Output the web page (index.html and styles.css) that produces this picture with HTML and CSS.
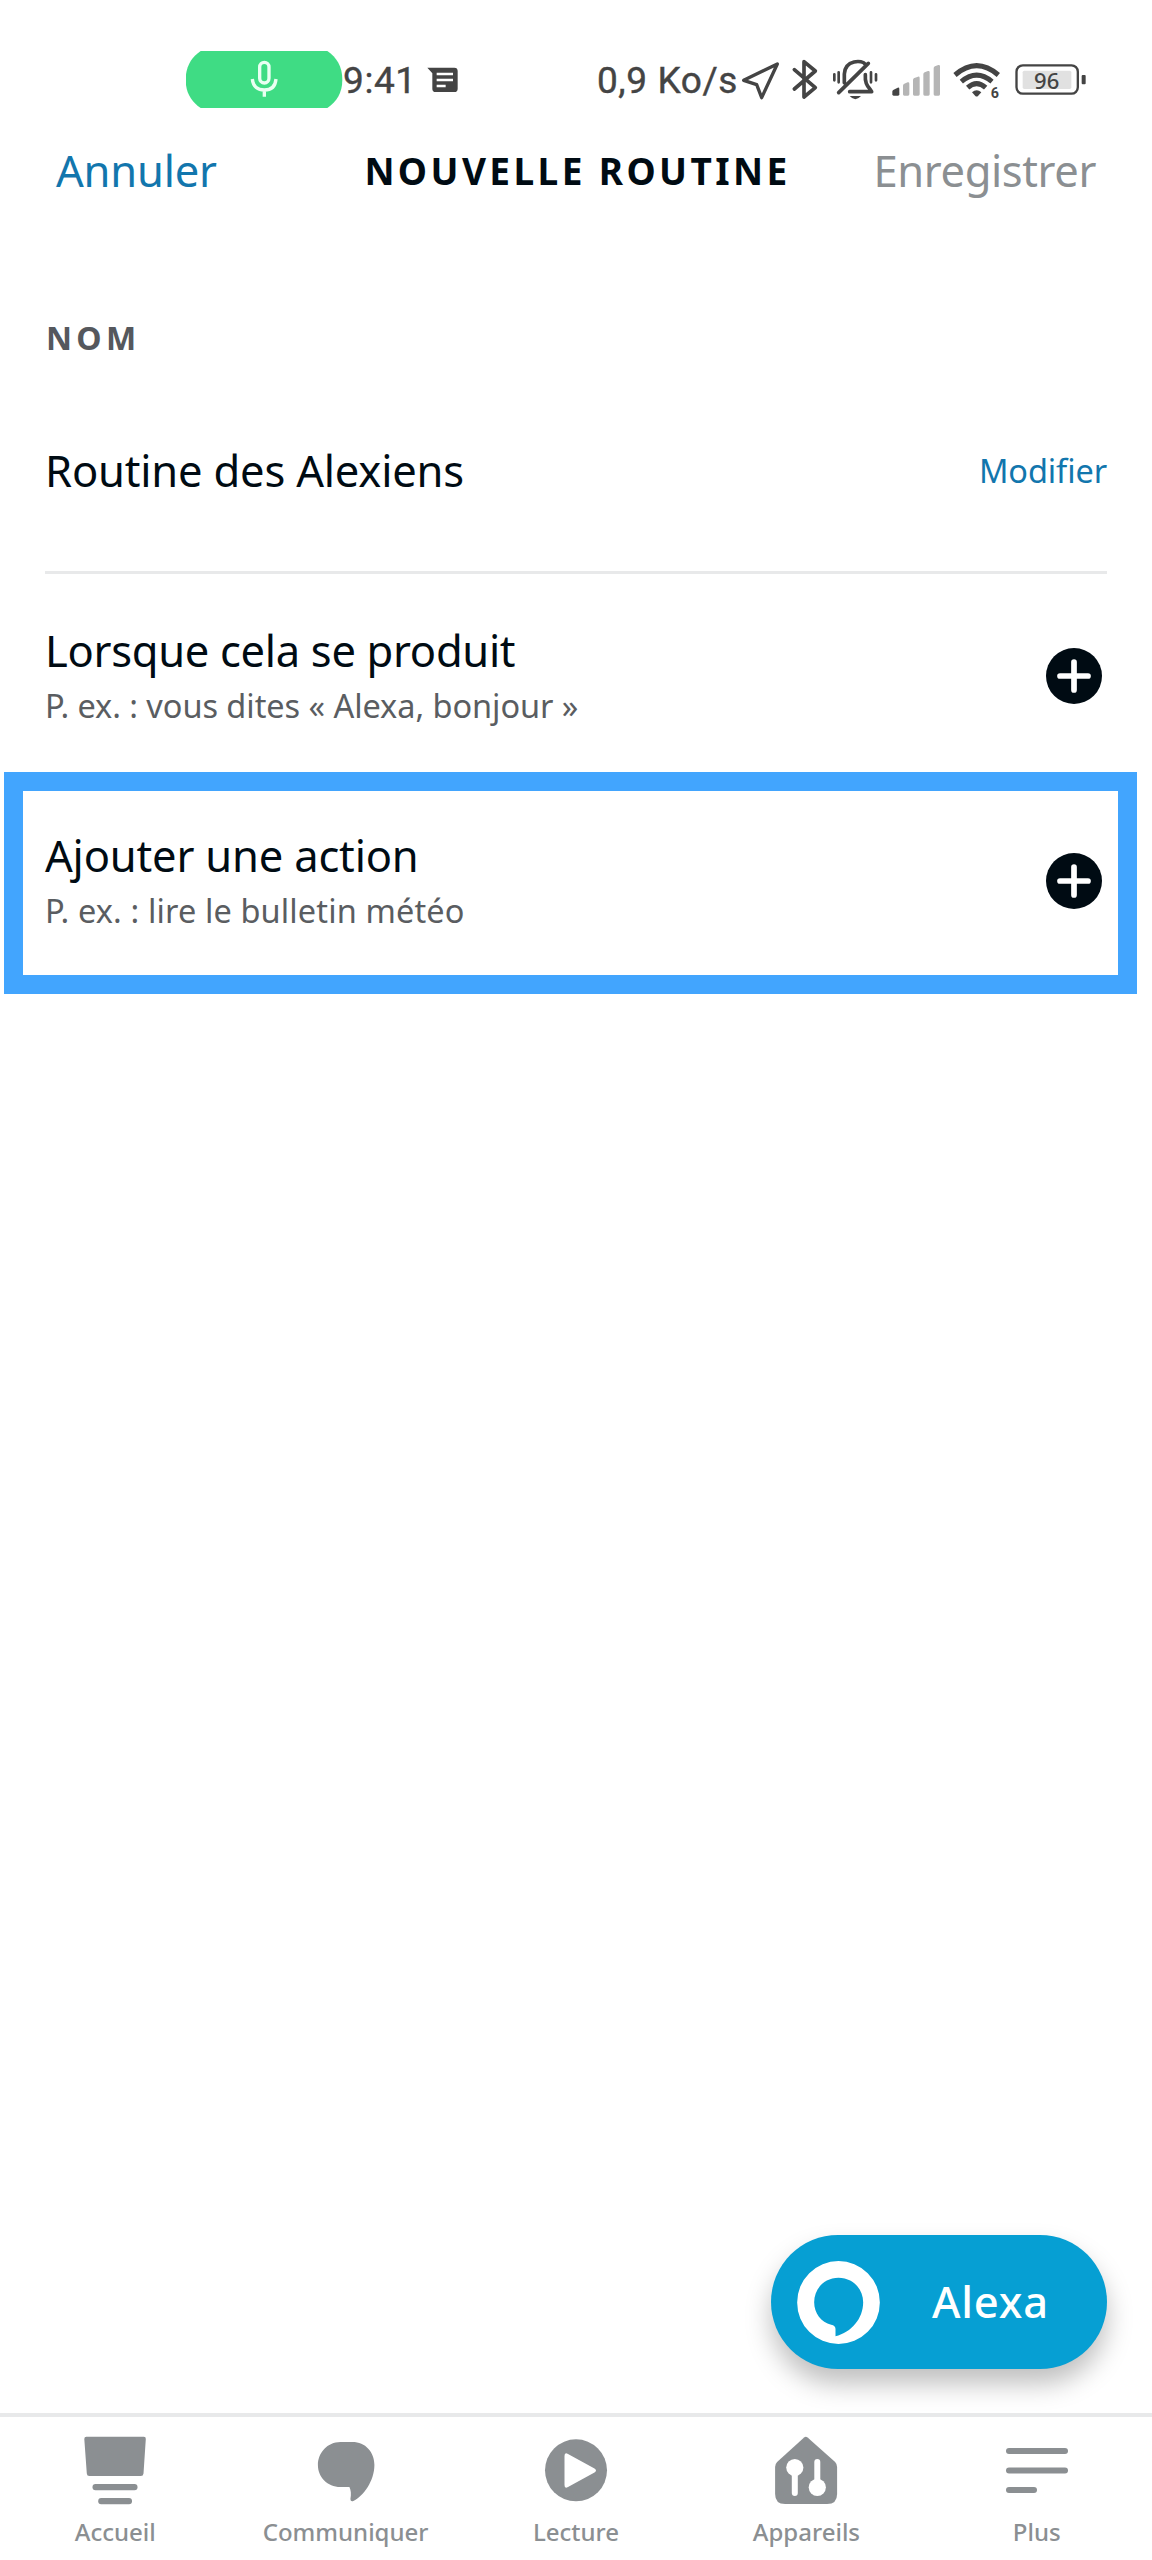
FILE: index.html
```html
<!DOCTYPE html>
<html lang="fr">
<head>
<meta charset="utf-8">
<title>Nouvelle routine</title>
<link rel="stylesheet" href="styles.css">
</head>
<body>
<div class="screen">
  <div class="status">
    <svg class="mic" viewBox="48 63 471 180">
      <path fill="#3fdc84" d="M92 63H472C500 82 517 110 517 149S500 215 472 234H92C64 215 47 188 47 149S64 82 92 63Z"/>
      <g fill="none" stroke="#e9fff2" stroke-width="10"><rect x="269" y="97" width="28" height="62" rx="14"/><path d="M247 147C249 170 264 180 283 180S316 170 318 147M283 180V200"/></g>
    </svg>
    <span class="time">9:41</span>
    <svg class="message" viewBox="744 63 126 180">
      <path fill="#444" d="M772 113H853Q863 113 863 123V176Q863 186 853 186H797Q787 186 787 176V130Z"/>
      <path stroke="#fff" stroke-width="7" d="M800 132H849M800 150H849M800 168H827"/>
    </svg>
    <span class="rate">0,9 Ko/s</span>
    <svg width="46" viewBox="480 33 138 180"><path class="line" stroke-width="10" d="M491 121L592 72L545 173L530 134Z"/></svg>
    <svg width="38" viewBox="618 33 114 180"><path class="line" stroke-width="11" d="M643 89L706 143L672 171V65L706 93L643 147"/></svg>
    <svg width="61" viewBox="12 33 183 180">
      <path class="line" stroke-width="11" d="M56 158L145 70M73 128V102C75 58 128 60 135 72M136 104C134 135 146 140 155 155H89"/>
      <path class="line" stroke-width="8" d="M43 103V121M56 97V127M153 97V127M168 103V121"/>
      <path fill="#444" d="M89 168H123Q106 187 89 168Z"/>
    </svg>
    <svg width="61" viewBox="195 33 183 180">
      <path fill="#444" d="M217 155Q217 151 221 149L233 143Q238 142 238 147V163Q238 167 234 167H221Q217 167 217 163Z"/>
      <path fill="#b5b5b5" d="M249 137Q249 133 253 131L263 127Q268 126 268 131V163Q268 167 264 167H253Q249 167 249 163ZM279 120Q279 116 283 114L294 110Q299 109 299 114V163Q299 167 295 167H283Q279 167 279 163ZM310 103Q310 99 314 97L324 93Q329 92 329 97V163Q329 167 325 167H314Q310 167 310 163ZM341 85Q341 81 345 79L355 75Q360 74 360 79V163Q360 167 356 167H345Q341 167 341 163Z"/>
    </svg>
    <svg width="60" viewBox="378 33 180 180">
      <path fill="none" stroke="#444" stroke-width="15" d="M405 105Q470 49 535 105M424 125Q470 86 516 125M443 143Q470 119 497 143"/>
      <path fill="#444" d="M456 157Q470 144 484 157L474 168Q470 171 466 168Z"/>
      <text class="wifi-gen" x="512" y="175">6</text>
    </svg>
    <svg width="84" viewBox="558 33 252 180">
      <rect x="589.500" y="76" width="184" height="85" rx="19" fill="none" stroke="#444" stroke-width="7"/>
      <rect x="608" y="92" width="146" height="55" rx="5" fill="#e1e1e1"/>
      <rect x="785" y="105" width="12" height="28" rx="3" fill="#444"/>
      <text class="charge" x="680" y="147" text-anchor="middle">96</text>
    </svg>
  </div>

  <header class="nav">
    <a class="cancel">Annuler</a>
    <h1>NOUVELLE ROUTINE</h1>
    <a class="save">Enregistrer</a>
  </header>

  <main>
    <h2>NOM</h2>
    <div class="name">
      <span class="title">Routine des Alexiens</span>
      <a class="edit">Modifier</a>
    </div>
    <div class="row">
      <div>
        <div class="title when">Lorsque cela se produit</div>
        <div class="hint">P. ex. : vous dites « Alexa, bonjour »</div>
      </div>
      <svg class="add" viewBox="0 0 56 56"><circle cx="28" cy="28" r="28"/><path d="M14 28H42M28 14V42"/></svg>
    </div>
    <div class="row selected">
      <div>
        <div class="title">Ajouter une action</div>
        <div class="hint weather">P. ex. : lire le bulletin météo</div>
      </div>
      <svg class="add" viewBox="0 0 56 56"><circle cx="28" cy="28" r="28"/><path d="M14 28H42M28 14V42"/></svg>
    </div>
  </main>

  <button class="alexa">
    <svg viewBox="171 153 248 249"><path fill="#fff" fill-rule="evenodd" d="M295 153A124 124.500 0 1 1 295 402A124 124.500 0 1 1 295 153ZM295 203C252 203 222 237 222 277C222 310 243 337 273 344Q286 346 286 357V379C334 367 369 326 369 277C369 237 338 203 295 203Z"/></svg>
    <span>Alexa</span>
  </button>

  <nav class="tabs">
    <a><svg viewBox="79.200 2432 72 76"><path d="M86.500 2436.700H144Q146.200 2436.700 146 2439L143.700 2473.500Q143.500 2476 141 2476H89.500Q87.200 2476 87 2473.500L84.500 2439Q84.500 2436.700 86.500 2436.700Z"/><rect x="92.700" y="2484" width="45" height="6.200" rx="3"/><rect x="98.400" y="2498" width="33.800" height="6.200" rx="3"/></svg><span>Accueil</span></a>
    <a><svg viewBox="309.600 2432 72 76"><path d="M340 2442H352C365 2442 374 2452 374 2465C374 2481 363 2496 353 2501Q350 2502 350 2499C351 2494 350.500 2490 349 2487H340C327 2487 317.500 2477 317.500 2465S327 2442 340 2442Z"/></svg><span>Communiquer</span></a>
    <a><svg viewBox="540 2432 72 76"><circle cx="576" cy="2470.300" r="31"/><path fill="#fff" d="M564.500 2456Q564.500 2452 568 2454L594.500 2468.500Q597.500 2470.500 594.500 2472.500L568 2487Q564.500 2489 564.500 2485Z"/></svg><span>Lecture</span></a>
    <a><svg viewBox="770.400 2432 72 76"><path d="M804.500 2437.400Q806.200 2436 808 2437.400L835.500 2462Q837.500 2464 837.500 2467V2494Q837.500 2504 827.500 2504H785.500Q775.500 2504 775.500 2494V2467Q775.500 2464 777.500 2462Z"/><g fill="#fff"><circle cx="795.200" cy="2467.500" r="8.600"/><rect x="792.200" y="2470" width="6" height="26" rx="3"/><circle cx="817.700" cy="2487.300" r="8.600"/><rect x="814.700" y="2459" width="6" height="26" rx="3"/></g></svg><span>Appareils</span></a>
    <a><svg viewBox="1000.800 2432 72 76"><rect x="1005.800" y="2448" width="62" height="6" rx="3"/><rect x="1005.800" y="2467.500" width="62" height="6" rx="3"/><rect x="1005.800" y="2487" width="31" height="6" rx="3"/></svg><span>Plus</span></a>
  </nav>
</div>
</body>
</html>
```
FILE: styles.css
```css
* { box-sizing: border-box; }

body {
  margin: 0;
  background: #fff;
  color: #000b13;
  font-family: "Noto Sans", "Open Sans", sans-serif;
}

.screen {
  position: relative;
  display: flex;
  flex-direction: column;
  width: 1152px;
  height: 2560px;
}

/* Status bar */
.status {
  display: flex;
  align-items: center;
  height: 111px;
  padding: 51px 62px 0 186px;
  color: #444;
  font: 37px/62px Roboto, sans-serif;
  letter-spacing: .6px;
  white-space: nowrap;
}
.status svg { flex: none; height: 60px; letter-spacing: 0; }
.status .mic { width: 157px; }
.status .message { width: 42px; }
.time { width: 75px; -webkit-text-stroke: .4px #444; }
.rate { flex: 1; padding-right: 2px; text-align: right; -webkit-text-stroke: .4px #444; }
.line { fill: none; stroke: #444; stroke-linecap: round; stroke-linejoin: round; }
.wifi-gen { font: 700 43px Roboto, sans-serif; fill: #444; }
.charge { font: 500 66px "Noto Sans", sans-serif; fill: #444; }

/* Navigation header */
.nav {
  display: grid;
  grid-template-columns: 1fr auto 1fr;
  align-items: center;
  height: 118px;
  padding: 0 56px;
  font-size: 43.5px;
  line-height: 60px;
}
.nav h1 { margin: 1px 0 0 3px; font-size: 37px; line-height: 60px; letter-spacing: 3.4px; }
.cancel { color: #1276ad; letter-spacing: -.2px; }
.save { color: #8b8f92; text-align: right; letter-spacing: -.4px; }

/* Routine form */
main { flex: 1; }
h2 {
  margin: 79px 45px 0 46px;
  color: #55585d;
  font-size: 32px;
  line-height: 60px;
  letter-spacing: 4.300px;
}
.name {
  display: flex;
  align-items: center;
  justify-content: space-between;
  height: 206px;
  margin: 0 45px;
  border-bottom: 3px solid #e8e9ea;
}
.title { font-size: 43.5px; line-height: 60px; letter-spacing: -.18px; }
.when { letter-spacing: -.3px; }
.edit { padding-top: 2px; color: #1276ad; font-size: 32.5px; letter-spacing: -.1px; }
.row {
  display: flex;
  align-items: center;
  justify-content: space-between;
  height: 198px;
  padding: 6px 50px 0 45px;
}
.row .title { margin-top: -4px; }
.hint { margin-top: 4px; color: #5a5d61; font-size: 32.5px; line-height: 44px; letter-spacing: -.05px; }
.weather { letter-spacing: .13px; }
.add { width: 56px; height: 56px; }
.add circle { fill: #000b13; }
.add path { stroke: #fff; stroke-width: 5.700px; stroke-linecap: round; }
.selected {
  width: 1133px;
  height: 222px;
  margin-left: 4px;
  padding: 0 16px 5px 22px;
  border: 19px solid #42a5fe;
}

/* Floating Alexa button */
.alexa {
  position: absolute;
  top: 2235px;
  left: 771px;
  display: flex;
  align-items: center;
  gap: 52px;
  width: 336px;
  height: 134px;
  padding: 0 0 0 26px;
  border: 0;
  border-radius: 67px;
  background: #069fd3;
  color: #fff;
  font: 500 43.5px/60px "Noto Sans", sans-serif;
  letter-spacing: .8px;
  box-shadow: 0 15px 26px rgba(0, 0, 0, .25);
}
.alexa svg { width: 83px; height: 83px; }
.alexa span { margin-top: -2px; }

/* Bottom tabs */
.tabs {
  display: grid;
  grid-template-columns: repeat(5, 1fr);
  height: 147px;
  padding-top: 15px;
  border-top: 4px solid #e8e9ea;
  color: #8b8f92;
  fill: #8b8f92;
  font-size: 24px;
  font-weight: 500;
  line-height: 36px;
}
.tabs a { display: flex; flex-direction: column; align-items: center; gap: 6px; }
.tabs svg { width: 72px; height: 76px; }
```
